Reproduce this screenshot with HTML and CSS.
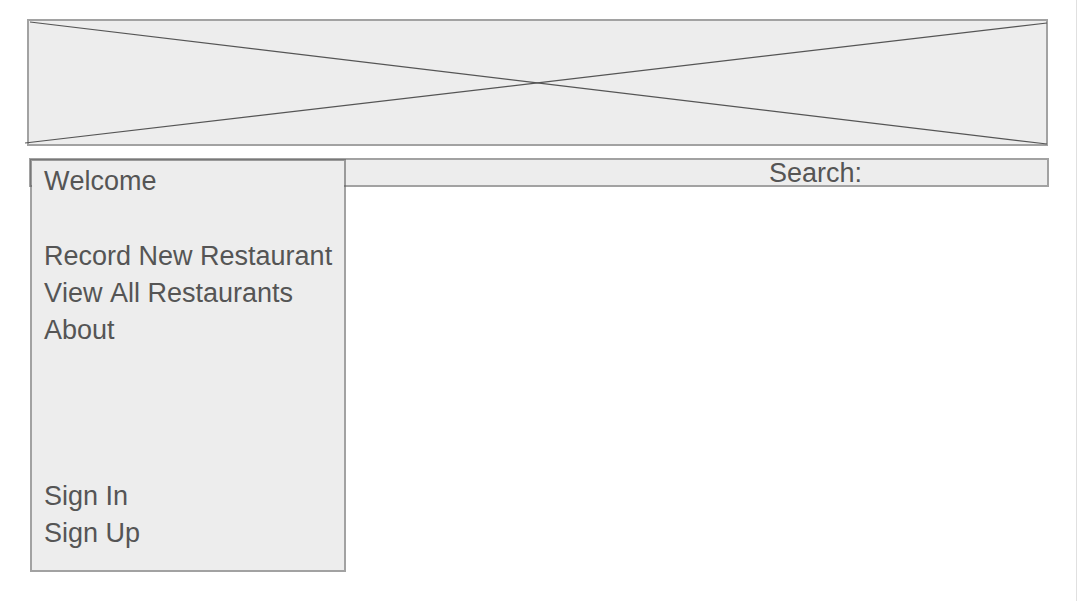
FILE: index.html
```html
<!DOCTYPE html>
<html lang="en">
<head>
  <meta charset="utf-8">
  <meta name="viewport" content="width=device-width, initial-scale=1">
  <title>Restaurants</title>
  <link rel="stylesheet" href="styles.css">
</head>
<body>
  <div class="page">
    <header class="banner">
      <svg class="banner-cross" viewBox="0 0 1017 123" preserveAspectRatio="none" aria-hidden="true">
        <line x1="1" y1="1" x2="1018" y2="123"/>
        <line x1="-4" y1="122" x2="1018" y2="2"/>
      </svg>
    </header>
    <div class="toolbar">
      <nav class="menu">
        <h1 class="menu-title">Welcome</h1>
        <ul class="menu-list">
          <li><a href="#record">Record New Restaurant</a></li>
          <li><a href="#restaurants">View All Restaurants</a></li>
          <li><a href="#about">About</a></li>
        </ul>
        <ul class="menu-list menu-account">
          <li><a href="#sign-in">Sign In</a></li>
          <li><a href="#sign-up">Sign Up</a></li>
        </ul>
      </nav>
      <form class="search">
        <label for="query">Search:</label>
        <input id="query" class="search-input" type="search">
      </form>
    </div>
  </div>
</body>
</html>
```
FILE: styles.css
```css
* {
  box-sizing: border-box;
}

body {
  margin: 0;
  background: #fff;
  color: #555;
  font-family: "Liberation Sans", Arial, sans-serif;
  font-size: 27px;
  font-kerning: none;
}

.page {
  min-height: 100vh;
  padding: 19px 27px 29px;
  border-right: 1px solid #e0e0e0;
}

.banner,
.toolbar,
.menu {
  border: 2px solid rgba(85, 85, 85, 0.55);
  background: #ededed;
  background-clip: padding-box;
}

.banner {
  height: 127px;
  margin-right: 1px;
}

.banner-cross {
  display: block;
  width: 100%;
  height: 100%;
  overflow: visible;
  stroke: #555;
  stroke-width: 1.2;
}

.banner-cross line {
  vector-effect: non-scaling-stroke;
}

.toolbar {
  position: relative;
  display: flex;
  justify-content: flex-end;
  margin: 12px 0 0 2px;
}

.menu {
  position: absolute;
  top: -1px;
  left: -1px;
  padding: 2px 12px 18px;
  line-height: 37px;
  white-space: nowrap;
}

.menu-title {
  margin: 0 0 38px;
  font-size: 27px;
  font-weight: 400;
}

.menu-list {
  margin: 0;
  padding: 0;
  list-style: none;
}

.menu-account {
  margin-top: 129px;
}

.menu a {
  color: inherit;
  text-decoration: none;
}

.search {
  display: flex;
  gap: 8px;
  height: 25px;
  line-height: 27px;
}

.search-input {
  width: 177px;
  padding: 0;
  border: 0;
  outline: 0;
  background: transparent;
  color: inherit;
  font: inherit;
}
```
